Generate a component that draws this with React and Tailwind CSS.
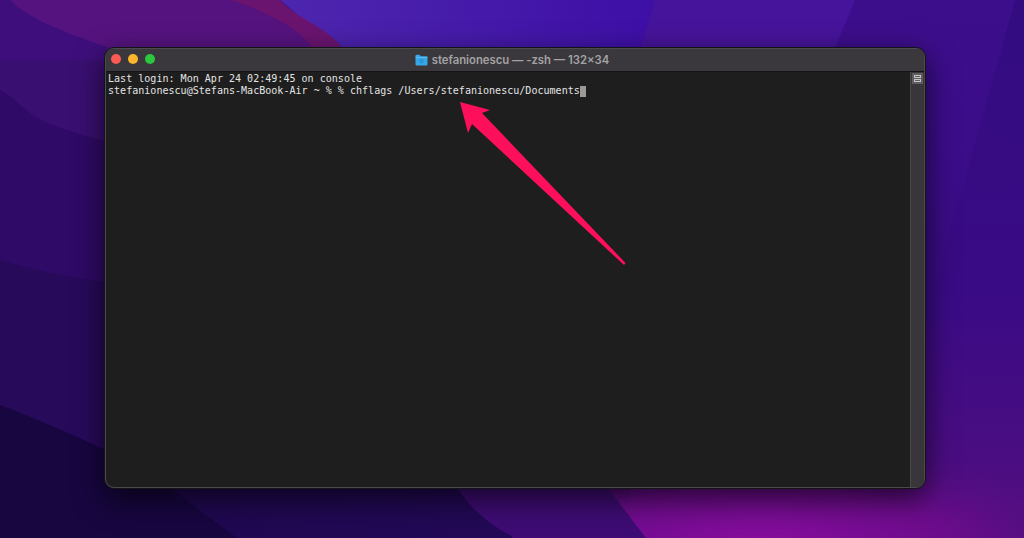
// Terminal window on a macOS wallpaper
import React from 'react';

const Wallpaper = () => (
  <svg className="absolute inset-0 w-full h-full" viewBox="0 0 1024 538" preserveAspectRatio="none">
    <defs>
      <linearGradient id="sky" x1="0" y1="0" x2="0" y2="1">
        <stop offset="0" stopColor="#3d0e8c" />
        <stop offset="0.55" stopColor="#3a0b85" />
        <stop offset="1" stopColor="#520e80" />
      </linearGradient>
      <linearGradient id="edge" x1="0" y1="0" x2="0" y2="1">
        <stop offset="0" stopColor="#330c80" />
        <stop offset="1" stopColor="#3a0b85" />
      </linearGradient>
      <linearGradient id="violet" gradientUnits="userSpaceOnUse" x1="280" y1="0" x2="655" y2="0">
        <stop offset="0" stopColor="#4d26ae" />
        <stop offset="1" stopColor="#3e0fa6" />
      </linearGradient>
      <radialGradient id="glow" gradientUnits="userSpaceOnUse" cx="760" cy="545" r="340" gradientTransform="translate(0 380) scale(1 0.3)">
        <stop offset="0" stopColor="#880c9e" />
        <stop offset="0.55" stopColor="#6c0c8c" />
        <stop offset="1" stopColor="#520e80" stopOpacity="0" />
      </radialGradient>
      <linearGradient id="deep" x1="0" y1="0" x2="1" y2="0">
        <stop offset="0" stopColor="#1f0850" />
        <stop offset="1" stopColor="#240958" />
      </linearGradient>
    </defs>
    <rect width="1024" height="538" fill="url(#sky)" />
    <path d="M1015 0 H1024 V320 H925 Z" fill="url(#edge)" />
    <path d="M655 0 L637 60 H830 L855 0 Z" fill="#46149a" />
    <path d="M280 0 H655 L637 60 H350 C340 40 310 28 280 0 Z" fill="url(#violet)" />
    <path d="M0 0 H280 L350 60 H0 Z" fill="#3e0f7c" />
    <path d="M230 0 H280 C300 22 335 28 350 60 H320 C305 30 270 14 230 0 Z" fill="#6a1470" />
    <path d="M10 0 H230 C270 14 305 30 320 60 H110 L107 47 C67 33 30 20 10 0 Z" fill="#55137f" />
    <path d="M0 60 H110 V300 H0 Z" fill="#3a0f72" />
    <path d="M0 90 C15 98 25 112 45 122 C65 130 85 136 110 142 V538 H0 Z" fill="#2f0a66" />
    <path d="M0 260 C40 272 75 278 110 283 V538 H0 Z" fill="#270a5a" />
    <rect x="100" y="480" width="530" height="58" fill="url(#deep)" />
    <path d="M0 405 C40 420 75 436 110 452 L170 488 L237 538 H0 Z" fill="#170640" />
    <path d="M452 480 C470 510 490 525 512 536 L512 538 H646 L590 465 Z" fill="#3e0c74" />
    <path d="M590 465 L646 538 H1024 V400 H590 Z" fill="url(#glow)" />
  </svg>
);

const FolderIcon = () => (
  <svg width="13" height="12" viewBox="0 0 13 12">
    <path d="M0.5 2 Q0.5 0.8 1.7 0.8 H4.6 L5.8 2.2 H11.3 Q12.5 2.2 12.5 3.4 V10.2 Q12.5 11.4 11.3 11.4 H1.7 Q0.5 11.4 0.5 10.2 Z" fill="#35a6e8" />
    <path d="M0.5 3.4 H12.5" stroke="#6cc4f2" strokeWidth="0.8" />
    <circle cx="6.5" cy="7.2" r="1.5" fill="none" stroke="#1f7fc0" strokeWidth="0.8" />
  </svg>
);

const Arrow = () => (
  <svg className="absolute inset-0 w-full h-full pointer-events-none" viewBox="0 0 1024 538">
    <path d="M460 102 L490 110 L482 113 L625.5 263 L624 265 L472 124 L468 133 Z" fill="#fe0f5c" />
  </svg>
);

const App = () => {
  return (
    <div className="relative w-full h-[538px] overflow-hidden bg-[#3a0b85] pl-[104px] pt-[47px]">
      <Wallpaper />
      <div className="relative w-[822px] h-[442px] rounded-[10px] border border-[#141416] bg-[#1e1e1e] shadow-[0_10px_30px_rgba(0,0,0,0.65)]">
        <div className="h-full flex flex-col rounded-[9px] overflow-hidden border border-[#4c4a4e]">
          <div className="relative h-[23px] shrink-0 flex items-center justify-center bg-[#3a383c] border-b border-[#141414]">
            <div className="absolute left-[5px] top-[5px] flex gap-[7px]">
              <span className="w-[10px] h-[10px] rounded-full bg-[#fc5a55]" />
              <span className="w-[10px] h-[10px] rounded-full bg-[#fdb52c]" />
              <span className="w-[10px] h-[10px] rounded-full bg-[#2ac73f]" />
            </div>
            <div className="flex items-center gap-[4px] mr-[6px] text-[#a3a2a5] text-[11.3px] font-semibold font-['Inter',sans-serif] whitespace-nowrap">
              <FolderIcon />
              <span>stefanionescu — -zsh — 132×34</span>
            </div>
          </div>
          <div className="flex flex-1 min-h-0">
            <div className="flex-1 pl-[2px] pt-[1px] text-[#e4e4e4] text-[10.05px] leading-[12px] font-['DejaVu_Sans_Mono',monospace] whitespace-pre">
              <div>Last login: Mon Apr 24 02:49:45 on console</div>
              <div className="flex items-center">
                <span>stefanionescu@Stefans-MacBook-Air ~ % % chflags /Users/stefanionescu/Documents</span>
                <span className="w-[6px] h-[11px] bg-[#9a9a9a]" />
              </div>
            </div>
            <div className="w-[14px] shrink-0 bg-[#38353b] border-l border-[#4a484c] pt-[1px] pl-[1px]">
              <div className="w-[11px] h-[11px] bg-[#5f5d61] flex flex-col justify-center gap-[1px] px-[2px]">
                <span className="h-[3px] border border-[#c4c4c4]" />
                <span className="h-[3px] border border-[#c4c4c4]" />
              </div>
            </div>
          </div>
        </div>
      </div>
      <Arrow />
    </div>
  );
};

export default App;
